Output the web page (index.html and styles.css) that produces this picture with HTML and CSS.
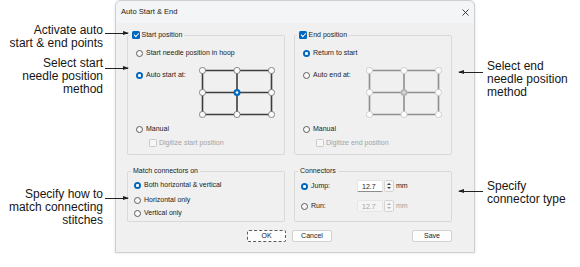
FILE: index.html
```html
<!DOCTYPE html>
<html lang="en">
  <head>
    <meta charset="UTF-8" />
    <meta name="viewport" content="width=device-width, initial-scale=1.0" />
    <title>Auto Start &amp; End</title>
    <link rel="stylesheet" href="styles.css">
  </head>
  <body>
    <div class="page">
      <aside class="notes notes-left">
        <p class="note note-activate">Activate auto<br>start &amp; end points<span class="arrow"></span></p>
        <p class="note note-start">Select start<br>needle position<br>method<span class="arrow"></span></p>
        <p class="note note-match">Specify how to<br>match connecting<br>stitches<span class="arrow"></span></p>
      </aside>

      <div class="dialog">
        <div class="titlebar">
          <span class="title">Auto Start &amp; End</span>
          <svg class="close" width="7" height="7" viewBox="0 0 7 7">
            <path d="M0.5 0.5 L6.5 6.5 M6.5 0.5 L0.5 6.5" stroke="#2b2b2b" stroke-width="0.9" fill="none" />
          </svg>
        </div>

        <div class="dialog-body">
          <div class="group-row">
            <fieldset class="group group-pos">
              <legend><span class="check checked"></span>Start position</legend>
              <div class="opt"><span class="radio"></span>Start needle position in hoop</div>
              <div class="opt-grid">
                <div class="opt"><span class="radio on"></span>Auto start at:</div>
                <svg class="grid" width="76" height="51" viewBox="0 0 76 51">
                  <g stroke="#3d3d3d" stroke-width="1.6">
                    <path d="M3.5 3.5 H72.5 M3.5 25.5 H72.5 M3.5 47.5 H72.5 M3.5 3.5 V47.5 M38 3.5 V47.5 M72.5 3.5 V47.5" />
                  </g>
                  <g fill="#fbfbfb" stroke="#6e6e6e" stroke-width="0.8">
                    <circle cx="3.5" cy="3.5" r="3.1" />
                    <circle cx="38" cy="3.5" r="3.1" />
                    <circle cx="72.5" cy="3.5" r="3.1" />
                    <circle cx="3.5" cy="25.5" r="3.1" />
                    <circle cx="72.5" cy="25.5" r="3.1" />
                    <circle cx="3.5" cy="47.5" r="3.1" />
                    <circle cx="38" cy="47.5" r="3.1" />
                    <circle cx="72.5" cy="47.5" r="3.1" />
                  </g>
                  <circle cx="38" cy="25.5" r="3.5" fill="#0067c0" />
                  <circle cx="38" cy="25.5" r="1.3" fill="#fff" />
                </svg>
              </div>
              <div class="opt opt-manual"><span class="radio"></span>Manual</div>
              <div class="opt opt-sub disabled"><span class="check"></span>Digitize start position</div>
            </fieldset>

            <fieldset class="group group-pos">
              <legend><span class="check checked"></span>End position</legend>
              <div class="opt"><span class="radio on"></span>Return to start</div>
              <div class="opt-grid">
                <div class="opt"><span class="radio"></span>Auto end at:</div>
                <svg class="grid" width="76" height="51" viewBox="0 0 76 51">
                  <g stroke="#8e8e8e" stroke-width="1.6">
                    <path d="M3.5 3.5 H72.5 M3.5 25.5 H72.5 M3.5 47.5 H72.5 M3.5 3.5 V47.5 M38 3.5 V47.5 M72.5 3.5 V47.5" />
                  </g>
                  <g fill="#fcfcfc" stroke="#c6c6c6" stroke-width="0.8">
                    <circle cx="3.5" cy="3.5" r="3.1" />
                    <circle cx="38" cy="3.5" r="3.1" />
                    <circle cx="72.5" cy="3.5" r="3.1" />
                    <circle cx="3.5" cy="25.5" r="3.1" />
                    <circle cx="72.5" cy="25.5" r="3.1" />
                    <circle cx="3.5" cy="47.5" r="3.1" />
                    <circle cx="38" cy="47.5" r="3.1" />
                    <circle cx="72.5" cy="47.5" r="3.1" />
                  </g>
                  <circle cx="38" cy="25.5" r="3.5" fill="#b5b5b5" />
                  <circle cx="38" cy="25.5" r="1.5" fill="#dadada" />
                </svg>
              </div>
              <div class="opt opt-manual"><span class="radio"></span>Manual</div>
              <div class="opt opt-sub disabled"><span class="check"></span>Digitize end position</div>
            </fieldset>
          </div>

          <div class="group-row group-row-low">
            <fieldset class="group group-match">
              <legend>Match connectors on</legend>
              <div class="opt"><span class="radio on"></span>Both horizontal &amp; vertical</div>
              <div class="opt opt-h"><span class="radio"></span>Horizontal only</div>
              <div class="opt opt-v"><span class="radio"></span>Vertical only</div>
            </fieldset>

            <fieldset class="group group-conn">
              <legend>Connectors</legend>
              <div class="opt opt-spin">
                <span class="radio on"></span>
                <span class="spin-label">Jump:</span>
                <span class="spin">
                  <span class="spin-field">12.7</span>
                  <span class="spin-btns"><i class="up"></i><i class="down"></i></span>
                </span>
                <span class="unit">mm</span>
              </div>
              <div class="opt opt-spin opt-run">
                <span class="radio"></span>
                <span class="spin-label">Run:</span>
                <span class="spin disabled">
                  <span class="spin-field">12.7</span>
                  <span class="spin-btns"><i class="up"></i><i class="down"></i></span>
                </span>
                <span class="unit disabled">mm</span>
              </div>
            </fieldset>
          </div>

          <div class="buttons">
            <button class="btn btn-ok">OK</button>
            <button class="btn">Cancel</button>
            <button class="btn btn-save">Save</button>
          </div>
        </div>
      </div>

      <aside class="notes notes-right">
        <p class="note note-end">Select end<br>needle position<br>method<span class="arrow"></span></p>
        <p class="note note-conn">Specify<br>connector type<span class="arrow"></span></p>
      </aside>
    </div>
  </body>
</html>
```

FILE: styles.css
```css
:root {
  --blue: #0067c0;
  --dialog-bg: #f0f0f0;
  --group-border: #d9d9d9;
  --text: #1b1b1b;
  --text-disabled: #a3a3a3;
}

* {
  margin: 0;
  padding: 0;
  box-sizing: border-box;
}

body {
  background: #ffffff;
  font-family: "Liberation Sans", Arial, sans-serif;
  color: var(--text);
}

.page {
  display: flex;
  width: 580px;
  height: 267px;
}

/* callouts */

.notes {
  font-size: 12px;
  line-height: 13px;
  color: #161616;
}

.notes-left {
  width: 115px;
  padding-right: 12px;
  text-align: right;
}

.notes-right {
  flex: 1;
  padding-left: 12px;
}

.note {
  position: relative;
}

.note-activate { margin-top: 23.5px; }
.note-start { margin-top: 7.5px; }
.note-match { margin-top: 92px; }
.note-end { margin-top: 59.5px; }
.note-conn { margin-top: 81px; }

.arrow {
  position: absolute;
  z-index: 2;
  height: 1px;
  background: #222;
}

.arrow::after {
  content: "";
  position: absolute;
  top: -2px;
  border-top: 2.5px solid transparent;
  border-bottom: 2.5px solid transparent;
}

.notes-left .arrow {
  left: 105px;
  width: 23px;
}

.notes-left .arrow::after {
  right: -1px;
  border-left: 6px solid #222;
}

.notes-right .arrow {
  left: -28px;
  width: 24px;
}

.notes-right .arrow::after {
  left: -1px;
  border-right: 6px solid #222;
}

.note-activate .arrow { top: 9px; }
.note-start .arrow { top: 11px; }
.note-match .arrow { top: 10px; }
.note-end .arrow { top: 12.5px; }
.note-conn .arrow { top: 11.5px; }

/* dialog */

.dialog {
  width: 360px;
  height: 253px;
  background: var(--dialog-bg);
  border: 1px solid #cfcfcf;
  border-radius: 6px 6px 0 0;
  box-shadow: 0 0 3px rgba(0, 0, 0, 0.12);
  font-size: 7px;
  line-height: 10px;
}

.titlebar {
  display: flex;
  align-items: center;
  justify-content: space-between;
  height: 22px;
  padding: 0 5px 0 5px;
  background: #f3f5f7;
  border-radius: 6px 6px 0 0;
}

.title {
  font-size: 7.6px;
  color: #222;
}

.dialog-body {
  padding: 7px 22px 0 11px;
}

.group-row {
  display: flex;
  gap: 9px;
}

.group-row-low {
  margin-top: 11px;
}

.group {
  flex: 1;
  min-width: 0;
  border: 1px solid var(--group-border);
  border-radius: 2px;
}

.group legend {
  display: flex;
  align-items: center;
  gap: 2px;
  height: 10px;
  padding: 0 2px;
}

.group-pos {
  padding: 8px 8px 6px;
}

.group-pos legend {
  margin-left: -6px;
}

.group-match,
.group-conn {
  padding: 4px 6px 3px;
}

.group-match legend,
.group-conn legend {
  margin-left: -3px;
}

.group-conn {
  padding-bottom: 9px;
}

/* options */

.opt {
  display: flex;
  align-items: center;
  gap: 3px;
  height: 10px;
  white-space: nowrap;
}

.opt-grid {
  display: flex;
  align-items: flex-start;
  margin-top: 8.5px;
}

.opt-grid .opt {
  width: 63px;
  margin-top: 3.5px;
}

.grid {
  display: block;
}

.opt-manual { margin-top: 6.5px; }
.opt-sub { margin-top: 4px; padding-left: 13px; gap: 2px; }
.opt-h { margin-top: 5px; }
.opt-v { margin-top: 3px; }

.disabled {
  color: var(--text-disabled);
}

.radio {
  flex: none;
  width: 7px;
  height: 7px;
  border: 0.8px solid #5c5c5c;
  border-radius: 50%;
  background: #f9f9f9;
}

.radio.on {
  border: none;
  background: radial-gradient(circle, #ffffff 0 1.3px, var(--blue) 1.7px);
}

.check {
  position: relative;
  flex: none;
  width: 7.5px;
  height: 7.5px;
  border: 0.8px solid #8a8a8a;
  border-radius: 1.5px;
  background: #fbfbfb;
}

.opt-sub .check {
  width: 8px;
  height: 8px;
  border-color: #c9c9c9;
  background: #f6f6f6;
}

.check.checked {
  border: none;
  background: var(--blue);
}

.check.checked::after {
  content: "";
  position: absolute;
  left: 1.8px;
  top: 1.6px;
  width: 3.6px;
  height: 1.8px;
  border-left: 1px solid #fff;
  border-bottom: 1px solid #fff;
  transform: rotate(-45deg);
}

/* spin boxes */

.opt-spin {
  height: 12px;
}

.opt-run {
  margin-top: 8px;
}

.spin-label {
  width: 43px;
}

.spin {
  display: flex;
  gap: 1px;
  height: 12px;
}

.spin-field {
  width: 26px;
  height: 12px;
  padding-left: 4px;
  line-height: 11px;
  background: #ffffff;
  border: 0.8px solid #e4e4e4;
  border-bottom: 1px solid #8d8d8d;
  border-radius: 1.5px;
}

.spin-btns {
  display: flex;
  flex-direction: column;
  justify-content: center;
  align-items: center;
  gap: 1.5px;
  width: 10px;
  height: 12px;
  background: #f5f5f5;
  border: 0.8px solid #d4d4d4;
  border-radius: 1.5px;
}

.spin-btns i {
  display: block;
  border-left: 2px solid transparent;
  border-right: 2px solid transparent;
}

.spin-btns .up { border-bottom: 2.5px solid #444; }
.spin-btns .down { border-top: 2.5px solid #444; }

.spin.disabled .spin-field {
  background: #f4f4f4;
  border-color: #e6e6e6;
  color: var(--text-disabled);
}

.spin.disabled .spin-btns .up { border-bottom-color: #b0b0b0; }
.spin.disabled .spin-btns .down { border-top-color: #b0b0b0; }

.unit {
  margin-left: -1px;
}

/* buttons */

.buttons {
  display: flex;
  gap: 6px;
  margin-top: 8px;
  padding-left: 120px;
}

.btn {
  width: 40px;
  height: 12px;
  font-family: inherit;
  font-size: 7px;
  line-height: 10px;
  color: var(--text);
  background: #fdfdfd;
  border: 0.8px solid #d2d2d2;
  border-radius: 2px;
}

.btn-ok {
  width: 39px;
  border: 1px dashed #5a5a5a;
}

.btn-save {
  margin-left: auto;
}
```
